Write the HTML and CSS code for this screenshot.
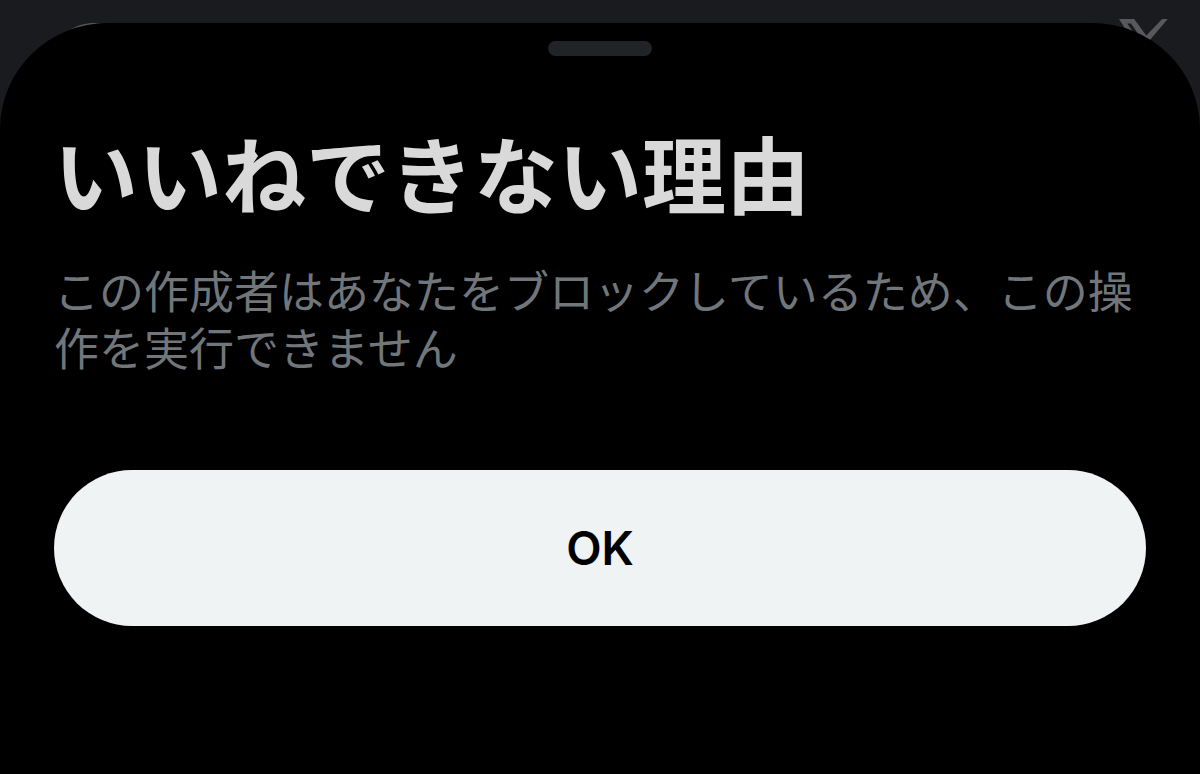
FILE: index.html
```html
<!DOCTYPE html>
<html lang="ja">
<head>
    <meta charset="UTF-8">
    <meta name="viewport" content="width=device-width, initial-scale=1.0">
    <title>いいねできない理由</title>
    <link rel="stylesheet" href="styles.css">
</head>
<body>

    <!-- dimmed app header behind the sheet -->
    <div class="app-header" aria-hidden="true">
        <div class="avatar"></div>
        <svg class="logo" viewBox="0 0 1200 1227" fill="currentColor" stroke="currentColor" stroke-width="56">
            <path d="M714 519 1135 28h-66L667 451 357 28H50l418 654L65 1199h66l378-449 327 449h314L714 519ZM569 688l-47-68L144 80h163l304 435 48 68 396 567H892L569 688Z"/>
        </svg>
    </div>

    <main class="sheet" role="dialog" aria-labelledby="sheet-title">
        <div class="handle"></div>
        <h1 id="sheet-title">いいねできない理由</h1>
        <p>この作成者はあなたをブロックしているため、この操作を実行できません</p>
        <button type="button" class="btn-ok">OK</button>
    </main>

</body>
</html>
```

FILE: styles.css
```css
body {
    display: flex;
    flex-direction: column;
    min-height: 100vh;
    margin: 0;
    padding-top: 23px;
    box-sizing: border-box;
    background-color: #1a1b1e;
    font-family: Inter, "Noto Sans CJK JP", sans-serif;
}
.app-header {
    position: absolute;
    top: 0;
    left: 0;
    right: 0;
    display: flex;
    justify-content: space-between;
    align-items: flex-start;
    padding: 19px 32px 0 48px;
    color: #58595b;
}
.avatar {
    width: 92px;
    height: 92px;
    margin-top: 4px;
    border-radius: 50%;
    background-color: #58595b;
}
.logo {
    width: 49px;
    height: 50px;
}
.sheet {
    position: relative;
    flex: 1;
    display: flex;
    flex-direction: column;
    padding: 18px 54px 54px;
    border-radius: 108px 108px 0 0 / 106px 106px 0 0;
    background-color: #000;
}
.handle {
    align-self: center;
    width: 104px;
    height: 15px;
    border-radius: 8px;
    background-color: #212427;
}
h1 {
    margin: 72px 0 0;
    color: #d9d9d9;
    font-size: 84px;
    line-height: 100px;
    font-weight: 700;
}
p {
    margin: 36px 0 0;
    color: #71767b;
    font-size: 45px;
    line-height: 57px;
}
.btn-ok {
    height: 156px;
    margin-top: 92px;
    border: none;
    border-radius: 78px;
    background-color: #eff3f4;
    color: #000;
    font-family: inherit;
    font-size: 46px;
    font-weight: 600;
    cursor: pointer;
}
```
